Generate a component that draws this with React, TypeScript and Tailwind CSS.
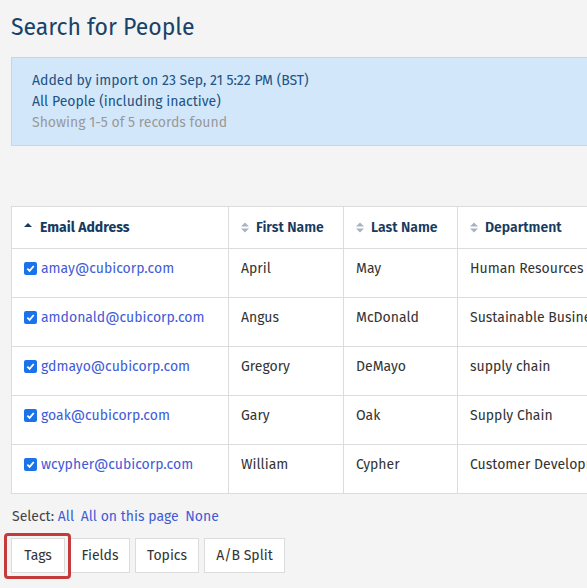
import React from 'react'

const people = [
  { email: 'amay@cubicorp.com', first: 'April', last: 'May', dept: 'Human Resources' },
  { email: 'amdonald@cubicorp.com', first: 'Angus', last: 'McDonald', dept: 'Sustainable Business' },
  { email: 'gdmayo@cubicorp.com', first: 'Gregory', last: 'DeMayo', dept: 'supply chain' },
  { email: 'goak@cubicorp.com', first: 'Gary', last: 'Oak', dept: 'Supply Chain' },
  { email: 'wcypher@cubicorp.com', first: 'William', last: 'Cypher', dept: 'Customer Development' },
]

function SortBoth() {
  return (
    <svg width="8" height="11" viewBox="0 0 8 11" className="mr-[7px] shrink-0">
      <path d="M0 4.5 L4 0.5 L8 4.5 Z" fill="#a7b3c0" />
      <path d="M0 6.5 L4 10.5 L8 6.5 Z" fill="#a7b3c0" />
    </svg>
  )
}

function SortUp() {
  return (
    <svg width="8" height="11" viewBox="0 0 8 11" className="mr-[8px] shrink-0">
      <path d="M0 5 L4 1 L8 5 Z" fill="#173a5e" />
    </svg>
  )
}

function Check() {
  return (
    <span className="mr-[4px] inline-flex h-[13px] w-[13px] shrink-0 items-center justify-center rounded-[2px] bg-[#1a73e8]">
      <svg width="9" height="9" viewBox="0 0 10 10">
        <path d="M1.5 5.2 L4 7.6 L8.6 2.2" fill="none" stroke="white" strokeWidth="2" />
      </svg>
    </span>
  )
}

export default function App() {
  return (
    <div
      className="h-[588px] w-[587px] overflow-hidden bg-[#f4f4f4] text-[14px] text-[#333]"
      style={{ fontFamily: '"Fira Sans", "Noto Sans", sans-serif' }}
    >
      <h1 className="pl-[11px] pt-[11px] text-[23px] leading-[32px] text-[#17426a]">Search for People</h1>

      <div className="ml-[11px] mt-[14px] h-[89px] w-[600px] border border-[#bcd8f2] bg-[#d3e7fb] pl-[20px] pt-[12px] leading-[21px]">
        <div className="text-[#215383]">Added by import on 23 Sep, 21 5:22 PM (BST)</div>
        <div className="text-[#215383]">All People (including inactive)</div>
        <div className="text-[#999]">Showing 1-5 of 5 records found</div>
      </div>

      <table className="ml-[11px] mt-[60px] w-[700px] table-fixed border-collapse bg-white">
        <colgroup>
          <col className="w-[217px]" />
          <col className="w-[115px]" />
          <col className="w-[114px]" />
          <col className="w-[254px]" />
        </colgroup>
        <thead>
          <tr className="h-[42px]">
            <th className="border border-[#dcdcdc] px-[12px] text-left font-bold text-[#173a5e]">
              <span className="flex items-center"><SortUp />Email Address</span>
            </th>
            <th className="border border-[#dcdcdc] px-[12px] text-left font-semibold text-[#173a5e]">
              <span className="flex items-center"><SortBoth />First Name</span>
            </th>
            <th className="border border-[#dcdcdc] px-[12px] text-left font-semibold text-[#173a5e]">
              <span className="flex items-center"><SortBoth />Last Name</span>
            </th>
            <th className="border border-[#dcdcdc] px-[12px] text-left font-semibold text-[#173a5e]">
              <span className="flex items-center"><SortBoth />Department</span>
            </th>
          </tr>
        </thead>
        <tbody>
          {people.map((p) => (
            <tr key={p.email} className="h-[49px]">
              <td className="h-[49px] border border-[#dcdcdc] px-[12px] pb-0 pt-[9px] align-top">
                <span className="flex items-center whitespace-nowrap text-[#3f5bd6]">
                  <Check />
                  {p.email}
                </span>
              </td>
              <td className="h-[49px] border border-[#dcdcdc] px-[12px] pb-0 pt-[9px] align-top">{p.first}</td>
              <td className="h-[49px] border border-[#dcdcdc] px-[12px] pb-0 pt-[9px] align-top">{p.last}</td>
              <td className="h-[49px] whitespace-nowrap border border-[#dcdcdc] px-[12px] pb-0 pt-[9px] align-top">{p.dept}</td>
            </tr>
          ))}
        </tbody>
      </table>

      <div className="ml-[12px] mt-[13px] leading-[20px] text-[#444]">
        Select: <a className="text-[#3f5bd6]">All</a>{' '}
        <a className="ml-[3px] text-[#3f5bd6]">All on this page</a>{' '}
        <a className="ml-[3px] text-[#3f5bd6]">None</a>
      </div>

      <div className="ml-[11px] mt-[11px] flex items-center gap-[5px]">
        <div className="relative">
          <div className="pointer-events-none absolute -bottom-[6px] -left-[7px] -right-[6px] -top-[5px] rounded-[4px] border-[3px] border-[#c43b3b]" />
          <button className="h-[35px] w-[54px] border border-[#dcdcdc] bg-white text-[#333]">Tags</button>
        </div>
        <button className="h-[35px] w-[60px] border border-[#dcdcdc] bg-white text-[#333]">Fields</button>
        <button className="h-[35px] w-[64px] border border-[#dcdcdc] bg-white text-[#333]">Topics</button>
        <button className="h-[35px] w-[81px] border border-[#dcdcdc] bg-white text-[#333]">A/B Split</button>
      </div>
    </div>
  )
}
